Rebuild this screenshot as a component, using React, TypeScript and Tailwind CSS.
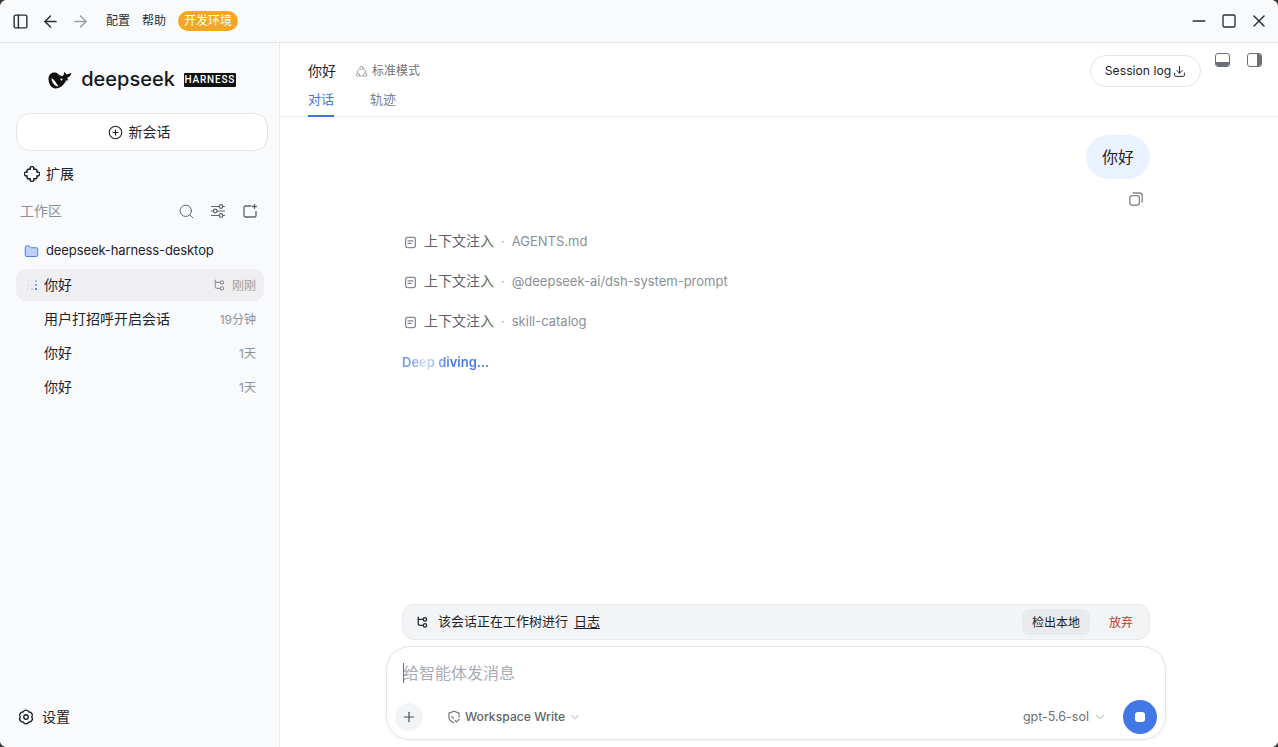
import React from "react";
import { ArrowLeft, ArrowRight, PanelLeft, Minus, Square, X, CirclePlus, Search, Folder, Download, Plus, ChevronDown } from "lucide-react";

const font = "font-['Inter','Noto_Sans_CJK_SC',sans-serif]";

function Whale() {
  return (
    <svg width="24" height="18" viewBox="0 0 24 18" fill="#111">
      <path d="M.5 8C.5 3.500 3.500 1 7 1.500c3.500.5 4 3.500 7 3.500 1.500 0 2-1.500 2-4 1 .5 2 1.500 2.500 2.500 1-.5 3-1 5-1.500-.5 2.500-2.500 4.500-4.500 5 .5 1 1 1.500 1.500 2-1 .5-2 .5-2.500.5-2 5-6.500 8-10.500 8C3.500 17.500.5 13 .5 8z" />
      <path d="M3.500 7c0 4 2.500 8 7 8.500-2-3-3.500-6.500-7-8.500z" fill="#f9fafc" />
      <circle cx="13.500" cy="8.500" r="1.100" fill="#f9fafc" />
    </svg>
  );
}

function Ico({ size = 16, className, width = 1.5, children }: { size?: number; className?: string; width?: number; children: React.ReactNode }) {
  return (
    <svg width={size} height={size} viewBox="0 0 16 16" fill="none" stroke="currentColor" strokeWidth={width} strokeLinecap="round" strokeLinejoin="round" className={className}>
      {children}
    </svg>
  );
}

function WorktreeIcon({ size = 13, className, width = 1.4 }: { size?: number; className?: string; width?: number }) {
  return (
    <Ico size={size} className={className} width={width}>
      <path d="M3 1.500v8.500c0 1.500 1 2.500 2.500 2.500h4" />
      <path d="M3 4.500h6.500" />
      <circle cx="12" cy="4.500" r="2.200" />
      <circle cx="12" cy="12.500" r="2.200" />
    </Ico>
  );
}

function Dots() {
  const colors = ["#dfe7f8", "#dfe7f8", "#a9c1f2", "#dfe7f8", "#dfe7f8", "#7fa3ee", "#dfe7f8", "#c9d8f6", "#5b8af0"];
  return (
    <div className="grid grid-cols-3 gap-[2px] w-[10px]">
      {colors.map((c, i) => (
        <span key={i} className="w-[2px] h-[2px]" style={{ background: c }} />
      ))}
    </div>
  );
}

function SessionRow({ title, time }: { title: string; time: string }) {
  return (
    <div className="flex items-center h-[34px] w-[248px] pl-[28px] pr-[8px] text-[14px] text-[#1f2328]">
      <span className="flex-1 pb-[2px]">{title}</span>
      <span className="text-[12px] text-[#8d929a] pt-[2px]">{time}</span>
    </div>
  );
}

function InjectRow({ name }: { name: string }) {
  return (
    <div className="flex items-center h-[40px] text-[13px] text-[#8a8f98]">
      <Ico size={13} width={1.500} className="text-[#85898f] mr-[7px] ml-[2px]">
        <rect x="2" y="1.800" width="12" height="12.400" rx="2.600" />
        <path d="M5 6h6M5 9.200h4" />
      </Ico>
      <span className="text-[14px] text-[#5c6168] pb-[4px]">上下文注入</span>
      <span className="mx-[7px] text-[#a8acb2]">·</span>
      <span>{name}</span>
    </div>
  );
}

export default function App() {
  return (
    <div className={`h-[747px] w-[1278px] overflow-hidden flex flex-col bg-[#3a3a3a] ${font}`}>
      <div className="h-full flex flex-col rounded-[7px] overflow-hidden bg-white">
        {/* title bar */}
        <div className="h-[43px] shrink-0 flex items-center bg-[#f9fafc] border-b border-[#e3e4e7] pl-[12px] pr-[9px] text-[#2b2e33]">
          <PanelLeft size={17} strokeWidth={2} />
          <ArrowLeft size={19} strokeWidth={1.900} className="ml-[12px]" />
          <ArrowRight size={19} strokeWidth={1.900} className="ml-[11px] text-[#9a9da3]" />
          <span className="ml-[16px] text-[12px]">配置</span>
          <span className="ml-[12px] text-[12px]">帮助</span>
          <span className="ml-[12px] h-[20px] w-[60px] flex items-center justify-center rounded-full bg-[#f5a623] text-white text-[12px]">开发环境</span>
          <div className="flex-1" />
          <Minus size={20} strokeWidth={1.800} />
          <Square size={16} strokeWidth={2} className="ml-[12px]" />
          <X size={20} strokeWidth={1.800} className="ml-[12px]" />
        </div>

        <div className="flex flex-1 min-h-0">
          {/* sidebar */}
          <aside className="w-[280px] shrink-0 bg-[#f9fafc] border-r border-[#e8e9ec] flex flex-col pl-[16px] pr-[11px]">
            <div className="h-[70px] flex items-center justify-center gap-[9px] pt-[3px] shrink-0">
              <Whale />
              <span className="font-medium text-[20px] text-[#16181c] leading-none pb-[2px]">deepseek</span>
              <span className="bg-[#111] text-white font-['Roboto'] font-medium text-[10px] tracking-[0.8px] h-[14px] w-[52px] flex items-center justify-center rounded-[1px]">HARNESS</span>
            </div>
            <div className="h-[38px] w-[252px] shrink-0 rounded-[14px] border border-[#e4e5e8] bg-white flex items-center justify-center gap-[6px] pr-[6px] pb-[2px] text-[14px] text-[#1f2328]">
              <CirclePlus size={15} strokeWidth={1.800} className="mt-[2px]" />
              新会话
            </div>
            <div className="mt-[7px] h-[32px] flex items-center pl-[8px] gap-[6px] text-[14px] text-[#1f2328]">
              <Ico size={16} width={1.500}>
                <path d="M6.300 3.200a1.900 1.900 0 1 1 3.400 0h1.800a1.500 1.500 0 0 1 1.500 1.500v1.600a1.900 1.900 0 1 1 0 3.400v1.600a1.500 1.500 0 0 1-1.500 1.500H9.700a1.900 1.900 0 1 1-3.400 0H4.500A1.500 1.500 0 0 1 3 11.300V9.700a1.900 1.900 0 1 1 0-3.400V4.700a1.500 1.500 0 0 1 1.500-1.500z" />
              </Ico>
              <span className="pb-[2px]">扩展</span>
            </div>
            <div className="mt-[5px] h-[32px] flex items-center pl-[4px] pr-[10px] text-[14px] text-[#8a8f98]">
              <span className="flex-1 pb-[2px]">工作区</span>
              <Search size={17} strokeWidth={1.400} className="text-[#5f646b]" />
              <Ico size={16} width={1.200} className="ml-[15px] text-[#5f646b]">
                <path d="M1.500 3.500h7.500M13 3.500h1.500M1.500 8h2M7 8h7.500M1.500 12.500h7.500M13 12.500h1.500" />
                <circle cx="11" cy="3.500" r="1.800" />
                <circle cx="5.200" cy="8" r="1.800" />
                <circle cx="11" cy="12.500" r="1.800" />
              </Ico>
              <Ico size={16} width={1.300} className="ml-[16px] text-[#5f646b]">
                <path d="M9 3H3.500A1.500 1.500 0 0 0 2 4.500v8A1.500 1.500 0 0 0 3.500 14h9a1.500 1.500 0 0 0 1.500-1.500V8.500" />
                <path d="M12.500 1.500v4M10.500 3.500h4" />
              </Ico>
            </div>
            <div className="mt-[8px] h-[32px] flex items-center pl-[8px] gap-[7px] text-[13px] tracking-[-0.1px] text-[#1f2328]">
              <Folder size={15} strokeWidth={1.600} className="text-[#4f7fe0] fill-[#bcd0f6]" />
              deepseek-harness-desktop
            </div>
            <div className="mt-[2px] flex items-center h-[32px] w-[248px] rounded-[10px] bg-[#efeff1] pl-[11px] pr-[8px] text-[14px] text-[#1f2328]">
              <Dots />
              <span className="ml-[7px] flex-1 pb-[2px]">你好</span>
              <WorktreeIcon size={12} className="text-[#8d929a]" />
              <span className="ml-[7px] text-[12px] text-[#9a9ea5] pt-[2px]">刚刚</span>
            </div>
            <div className="mt-[1px]">
              <SessionRow title="用户打招呼开启会话" time="19分钟" />
              <SessionRow title="你好" time="1天" />
              <SessionRow title="你好" time="1天" />
            </div>
            <div className="flex-1" />
            <div className="h-[32px] mb-[14px] flex items-center pl-[2px] gap-[8px] text-[14px] text-[#1f2328]">
              <Ico size={16} width={1.400}>
                <path d="M5.100 3A3.200 3.200 0 0 1 10.900 3A3.200 3.200 0 0 1 13.800 8A3.200 3.200 0 0 1 10.900 13A3.200 3.200 0 0 1 5.100 13A3.200 3.200 0 0 1 2.200 8A3.200 3.200 0 0 1 5.100 3Z" />
                <circle cx="8" cy="8" r="2.200" />
              </Ico>
              <span className="pb-[2px]">设置</span>
            </div>
          </aside>

          {/* main */}
          <main className="flex-1 min-w-0 flex flex-col bg-white">
            <header className="h-[74px] shrink-0 border-b border-[#e8e9ec] flex pl-[28px] pr-[16px]">
              <div className="flex flex-col">
                <div className="flex items-center h-[20px] mt-[18px] text-[14px] text-[#1f2328]">
                  <span className="pb-[2px]">你好</span>
                  <Ico size={13} width={1} className="ml-[19px] text-[#8d929a]">
                    <circle cx="8" cy="3.500" r="2" />
                    <circle cx="3.500" cy="12" r="2" />
                    <circle cx="12.500" cy="12" r="2" />
                    <path d="M5.500 4.500A5.500 5.500 0 0 0 2.500 9.500M10.500 4.500a5.500 5.500 0 0 1 3 5M5.800 13.500h4.400" />
                  </Ico>
                  <span className="ml-[4px] text-[12px] text-[#6f747b]">标准模式</span>
                </div>
                <div className="flex text-[13px] gap-[36px] mt-[1px]">
                  <div className="h-[35px] pt-[7px] border-b-2 border-[#3f74e0] text-[#3f74e0] leading-[20px] w-[26px]">对话</div>
                  <div className="h-[35px] pt-[7px] text-[#7b8087] leading-[20px]">轨迹</div>
                </div>
              </div>
              <div className="flex-1" />
              <div className="mt-[12px] h-[32px] w-[111px] rounded-full border border-[#e4e5e8] flex items-center justify-center gap-[2px] pt-[1px] text-[12.200px] text-[#1f2328]">
                Session log
                <Download size={13} strokeWidth={1.800} />
              </div>
              <div className="mt-[10px] ml-[14px] w-[15px] h-[14px] rounded-[3px] border-[1.500px] border-[#6b6f76] flex flex-col justify-end overflow-hidden">
                <div className="h-[4px] bg-[#6b6f76]" />
              </div>
              <div className="mt-[10px] ml-[17px] w-[15px] h-[14px] rounded-[3px] border-[1.500px] border-[#6b6f76] flex justify-end overflow-hidden">
                <div className="w-[4px] bg-[#6b6f76]" />
              </div>
            </header>

            <div className="flex-1 min-h-0 flex flex-col items-center pr-[6px]">
              <div className="w-[748px] flex-1 flex flex-col pt-[18px]">
                <div className="self-end w-[64px] h-[44px] rounded-[22px] bg-[#ebf2ff] flex items-center justify-center text-[16px] text-[#1f2328]">你好</div>
                <div className="self-end mr-[6px] mt-[12px] h-[16px]">
                  <Ico size={16} width={1.400} className="text-[#85898f]">
                    <rect x="1.800" y="4.600" width="9.600" height="9.600" rx="2.600" />
                    <path d="M5.200 2h6.300a2.700 2.700 0 0 1 2.700 2.700V11" />
                  </Ico>
                </div>
                <div className="mt-[15px]">
                  <InjectRow name="AGENTS.md" />
                  <InjectRow name="@deepseek-ai/dsh-system-prompt" />
                  <InjectRow name="skill-catalog" />
                </div>
                <div className="mt-[10px] text-[13px] font-semibold leading-[20px] w-fit bg-[linear-gradient(90deg,#6d95ea_0%,#7ea2ee_12%,#d5e1fa_26%,#8faef0_40%,#4677e4_55%,#4677e4_100%)] bg-clip-text text-transparent">Deep diving...</div>
                <div className="flex-1" />
                <div className="h-[36px] rounded-[12px] border border-[#e9eaed] bg-[#f3f4f6] flex items-center pl-[13px] pr-[4px] text-[12px] text-[#1f2328]">
                  <WorktreeIcon size={12} width={1.700} className="text-[#25282d]" />
                  <span className="ml-[10px] text-[13px]">该会话正在工作树进行</span>
                  <span className="ml-[6px] text-[13px] underline underline-offset-2">日志</span>
                  <div className="flex-1" />
                  <span className="h-[26px] w-[68px] flex items-center justify-center rounded-[7px] bg-[#e9eaec] pt-[1px]">检出本地</span>
                  <span className="ml-[7px] h-[26px] w-[48px] flex items-center justify-center text-[#c0392b] pt-[1px]">放弃</span>
                </div>
              </div>
              <div className="w-[780px] h-[94px] mt-[6px] mb-[7px] shrink-0 rounded-[24px] border border-[#e4e5e8] bg-white shadow-[0_1px_4px_rgba(0,0,0,0.05)] flex flex-col pl-[8px] pr-[8px]">
                <div className="h-[50px] flex items-center pl-[8px] pt-[1px] text-[16px] text-[#a8adb5]">
                  <span className="w-[1px] h-[20px] bg-[#3f74e0] -mr-[1px]" />
                  给智能体发消息
                </div>
                <div className="flex items-center h-[28px] mt-[6px]">
                  <div className="w-[28px] h-[28px] rounded-full bg-[#f3f4f6] flex items-center justify-center text-[#4a4e55]">
                    <Plus size={16} strokeWidth={1.800} />
                  </div>
                  <Ico size={14} width={1.300} className="ml-[24px] text-[#6b7078]">
                    <path d="M13.800 8V3.600L8 1.500 2.200 3.600V8c0 3.500 2.500 5.500 5.800 6.500" />
                    <path d="M5.500 7.500 7.500 9.500M9.500 12l1.500 1.500 3-3" />
                  </Ico>
                  <span className="ml-[4px] text-[12.200px] font-medium text-[#5f646b]">Workspace Write</span>
                  <ChevronDown size={14} strokeWidth={1.500} className="ml-[3px] text-[#a0a4aa]" />
                  <div className="flex-1" />
                  <span className="text-[12.500px] text-[#6b7078]">gpt-5.6-sol</span>
                  <ChevronDown size={14} strokeWidth={1.500} className="ml-[4px] text-[#a0a4aa]" />
                  <div className="ml-[16px] w-[34px] h-[34px] rounded-full bg-[#4277e6] flex items-center justify-center">
                    <span className="w-[10px] h-[10px] rounded-[3px] bg-white" />
                  </div>
                </div>
              </div>
            </div>
          </main>
        </div>
      </div>
    </div>
  );
}
